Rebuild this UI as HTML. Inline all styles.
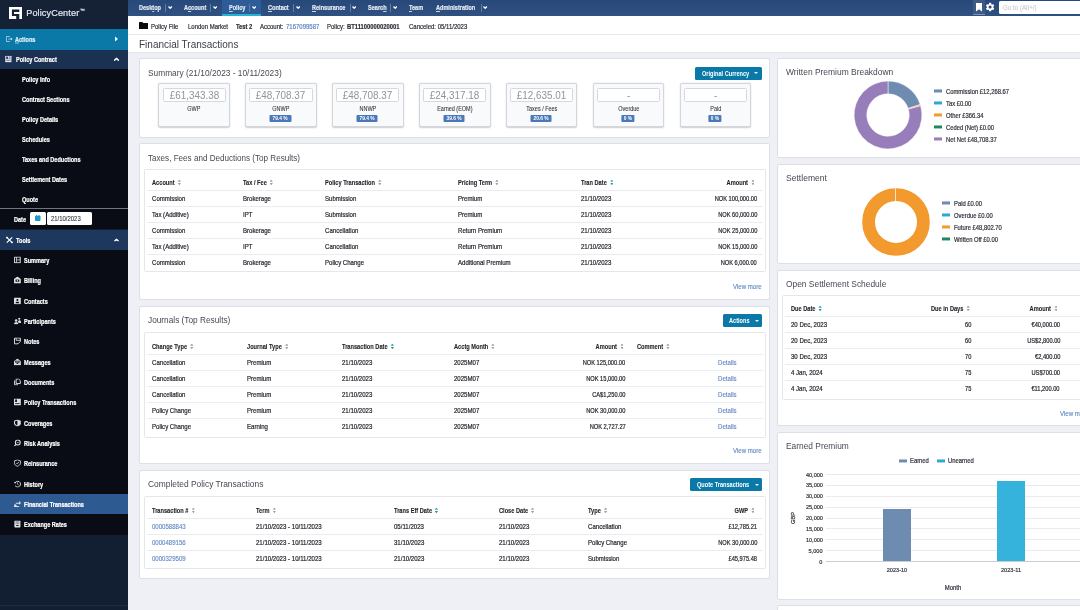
<!DOCTYPE html>
<html lang="en">
<head>
<meta charset="utf-8">
<title>Financial Transactions - PolicyCenter</title>
<style>
*{box-sizing:border-box;margin:0;padding:0}
html,body{width:1080px;height:610px;overflow:hidden}
body{font-family:"Liberation Sans",sans-serif;font-size:7px;color:#2b2f36;-webkit-text-stroke:.2px;background:#eef0f5;position:relative}
a{color:#5c86c2;text-decoration:none}
.abs{position:absolute}
#root{position:absolute;left:0;top:0;width:1080px;height:610px;overflow:hidden;will-change:transform;background:#eef0f5}
#side{position:absolute;left:0;top:0;width:127.5px;height:610px;background:#121e31;color:#fff;font-weight:bold;font-size:6.4px}
#logo{position:absolute;left:0;top:0;width:127.5px;height:29px;background:#152135}
#logo span{position:absolute;left:26.2px;top:9px;font-size:9.1px;line-height:1;font-weight:normal;color:#e4e8ee;letter-spacing:.13px;white-space:nowrap}
#logo sup{font-size:4.8px;position:relative;top:-.3px;left:.8px;vertical-align:top;letter-spacing:0}
.srow{position:absolute;left:0;width:127.5px}
.srow .t{position:absolute;top:calc(50% - .1px);transform:translateY(-50%) scaleX(.87);transform-origin:0 50%;white-space:nowrap}
.sitem{background:#090c15}
.ico{position:absolute;top:50%;transform:translateY(-50%)}
#nav{position:absolute;left:127.5px;top:0;width:952.5px;height:15.8px;background:linear-gradient(#27487a,#2f5180);color:#fff;font-size:6.4px;font-weight:bold}
#nav{z-index:2}
#nav .n u{text-decoration-thickness:.5px;text-underline-offset:.6px;text-decoration-color:rgba(255,255,255,.75)}
#nav .n{position:absolute;top:3.5px;white-space:nowrap;color:#e3eaf4;transform:scaleX(.87);transform-origin:0 50%}
#nav .sep{position:absolute;top:3.5px;width:1px;height:8.5px;background:#5f7ca3}
#nav svg.ch{position:absolute;top:5.5px}
#info{position:absolute;left:127.5px;top:15px;width:952.5px;height:20px;background:#fff;border-bottom:1px solid #e9eaed;font-size:6.6px}
#info span,#info a{position:absolute;top:8.1px;white-space:nowrap;transform:scaleX(.91);transform-origin:0 50%}
#info b{display:inline-block}
#title{position:absolute;left:127.5px;top:35px;width:952.5px;height:18px;background:#fff;border-bottom:1px solid #e4e5e9}
#title span{position:absolute;left:11.7px;top:2.7px;font-size:10.7px;color:#3a3f47;-webkit-text-stroke:0;transform:scaleX(.935);transform-origin:0 50%;white-space:nowrap}
.card{position:absolute;background:#fff;border:1px solid #dcdfe6;border-radius:2px}
.ct{position:absolute;left:7px;font-size:9.1px;color:#454a52;-webkit-text-stroke:0;white-space:nowrap;transform:translateY(-50%) scaleX(.92);transform-origin:0 50%}
.btn{position:absolute;background:#0a79a8;border-radius:1.5px;height:13px}
.btn span{position:absolute;left:6.6px;top:3px;color:#fff;font-weight:bold;font-size:6.4px;-webkit-text-stroke:0;white-space:nowrap;transform:scaleX(.875);transform-origin:0 50%}
.btn i{position:absolute;right:3.3px;top:5.4px;width:0;height:0;border-left:2.1px solid transparent;border-right:2.1px solid transparent;border-top:2.4px solid #fff}
.tbl{position:absolute;border:1px solid #e4e6ea;border-radius:1.5px;background:#fff}
.ln{position:absolute;left:2px;right:2px;height:1px;background:#ebecf0}
.c{position:absolute;white-space:nowrap;font-size:6.6px;color:#24272d;transform:translateY(-50%) scaleX(.92);transform-origin:0 50%}
.c.am{transform:translateY(-50%) scaleX(.865)}
.c.h{font-weight:bold;font-size:6.4px;color:#1d2025;-webkit-text-stroke:.1px;transform:translateY(-50%) scaleX(.885)}
.c.ra{transform-origin:100% 50%}
.lk,a.c{color:#5c86c2;-webkit-text-stroke:.1px}
.si{display:inline-block;width:3.8px;height:5.8px;margin-left:3.4px;vertical-align:-1px}
.tile{position:absolute;top:23.9px;width:71.7px;height:43.8px;border:1px solid #d3d6dc;border-radius:2px;background:#f9fafb;box-shadow:0 .5px 1.5px rgba(0,0,0,.2)}
.tile .v{position:absolute;left:3.2px;right:3.4px;top:3.6px;height:14.3px;border:1px solid #d5d8de;border-radius:1.5px;background:#fff}
.tile .v span{position:absolute;left:0;right:0;top:0;text-align:center;font-size:10.8px;line-height:13px;color:#8f939b;-webkit-text-stroke:0;transform:scaleX(.915)}
.tile .l{position:absolute;left:0;right:0;top:21px;text-align:center;font-size:6.3px;color:#33363c;-webkit-text-stroke:.08px;transform:scaleX(.87)}
.tile .b{position:absolute;left:calc(50% - .6px);top:30.8px;transform:translateX(-50%);height:7.2px;background:#4a78b8;border-radius:1px;white-space:nowrap}
.tile .b span{display:block;line-height:7.2px;padding:0 1.8px;color:#fff;font-weight:bold;-webkit-text-stroke:0;font-size:5.6px;transform:scaleX(.87)}
.lg{position:absolute;white-space:nowrap;font-size:6.5px;color:#2f333a;transform:translateY(-50%) scaleX(.9);transform-origin:0 50%}
.sw{position:absolute;width:7.6px;height:3.1px;transform:translateY(-50%)}
.ax{position:absolute;white-space:nowrap;font-size:6.2px;color:#2f333a;transform:translateY(-50%) scaleX(.9)}
</style>
</head>
<body>
<div id="root">
<div id="side">
<div id="logo"><svg class="abs" style="left:8.5px;top:6.8px" width="13" height="12.1" viewBox="0 0 13 12.1"><path d="M0 0H13V12.1H10.3V7H5V5H10.3V2.400H2.9V9.1H7.2V12.1H0Z" fill="#fff"/></svg><span>PolicyCenter<sup>™</sup></span></div>
<div class="srow" style="top:28.5px;height:21px;background:#0a79a8"><svg class="ico" style="left:6px" width="7" height="6" viewBox="0 0 7 6"><path d="M.4 .5h3.4M.4 5.5h3.4M.4 .5v5" stroke="#cfe6f1" stroke-width=".7" fill="none"/><path d="M2.2 3h3.2" stroke="#cfe6f1" stroke-width=".7"/><path d="M4.8 1.6L6.6 3 4.8 4.4z" fill="#cfe6f1"/></svg><span class="t" style="left:15px;color:#dff0f8"><u style="text-decoration-thickness:.5px;text-underline-offset:.5px;text-decoration-color:rgba(255,255,255,.6)">A</u>ctions</span><svg class="ico" style="left:114.5px" width="3" height="5" viewBox="0 0 3 5"><path d="M0 0L3 2.5 0 5z" fill="#fff"/></svg></div>
<div class="srow" style="top:49.5px;height:19.5px;background:#1b3152"><svg class="ico" style="left:5.1px" width="6.700" height="6.700" viewBox="0 0 6.5 7"><rect width="6.5" height="7" rx=".6" fill="#e2e6ec"/><rect x="1" y="1" width="1.8" height="2.4" fill="#1b3152"/><path d="M3.6 1.4h2M3.6 2.8h2M1 4.8h4.5" stroke="#1b3152" stroke-width=".6"/></svg><span class="t" style="left:16px">Policy Contract</span><svg class="ico" style="left:113.5px" width="5" height="3.4" viewBox="0 0 5 3.4"><path d="M.6 3L2.5 1 4.4 3" fill="none" stroke="#fff" stroke-width="1.4" stroke-linecap="round" stroke-linejoin="round"/></svg></div>
<div class="srow sitem" style="top:69px;height:20px"><span class="t" style="left:21.5px">Policy Info</span></div>
<div class="srow sitem" style="top:89px;height:20px"><span class="t" style="left:21.5px">Contract Sections</span></div>
<div class="srow sitem" style="top:109px;height:20px"><span class="t" style="left:21.5px">Policy Details</span></div>
<div class="srow sitem" style="top:129px;height:20px"><span class="t" style="left:21.5px">Schedules</span></div>
<div class="srow sitem" style="top:149px;height:20px"><span class="t" style="left:21.5px">Taxes and Deductions</span></div>
<div class="srow sitem" style="top:169px;height:20px"><span class="t" style="left:21.5px">Settlement Dates</span></div>
<div class="srow sitem" style="top:189px;height:20px"><span class="t" style="left:21.5px">Quote</span></div>
<div class="srow sitem" style="top:207.8px;height:21.7px;border-top:1.8px solid #71757c"><span class="t" style="left:13.5px;top:9.800px">Date</span><div class="abs" style="left:30px;top:3.400px;width:15.5px;height:12.5px;background:#fff;border-radius:1.5px"><svg class="abs" style="left:5px;top:3px" width="5.5" height="6" viewBox="0 0 5.5 6"><rect y=".8" width="5.5" height="5.2" rx=".7" fill="#1f9ac6"/><rect x="1" width=".9" height="1.6" fill="#1f9ac6"/><rect x="3.6" width=".9" height="1.6" fill="#1f9ac6"/></svg></div><div class="abs" style="left:47px;top:3.400px;width:45px;height:12.5px;background:#fff;border-radius:1.5px"><span class="abs" style="left:4px;top:2.6px;color:#2b2f36;font-weight:normal;font-size:6.6px;-webkit-text-stroke:.08px;transform:scaleX(.9);transform-origin:0 50%">21/10/2023</span></div></div>
<div class="srow" style="top:229.5px;height:20.5px;background:#1d385c"><svg class="ico" style="left:5.5px" width="7" height="7" viewBox="0 0 7 7"><path d="M.8 .8L6.2 6.2M6.2 .8L.8 6.2" stroke="#fff" stroke-width="1.2"/><circle cx="1" cy="1" r="1" fill="#fff"/><circle cx="6" cy="6" r=".9" fill="#fff"/></svg><span class="t" style="left:16px">Tools</span><svg class="ico" style="left:113.5px" width="5" height="3.4" viewBox="0 0 5 3.4"><path d="M.6 3L2.5 1 4.4 3" fill="none" stroke="#fff" stroke-width="1.4" stroke-linecap="round" stroke-linejoin="round"/></svg></div>
<div class="srow sitem" style="top:250.00px;height:20.37px;"><svg class="ico" style="left:13.5px" width="7" height="7.2" viewBox="0 0 7.2 7.2"><rect x="0.6" y="0.6" width="5.8" height="5.8" fill="none" stroke="#dcdfe5" stroke-width="1"/><path d="M2.6 .6v5.8M2.6 3.5h3.8" stroke="#dcdfe5" stroke-width=".8" fill="none"/></svg><span class="t" style="left:23.5px">Summary</span></div>
<div class="srow sitem" style="top:270.32px;height:20.37px;"><svg class="ico" style="left:13.5px" width="7" height="7.2" viewBox="0 0 7.2 7.2"><path d="M0 2.6L3.5 0 7 2.6V7H0z" fill="#dcdfe5"/><rect x="1.6" y="3.2" width="3.8" height="2.2" fill="#090c15"/><circle cx="3.5" cy="4.3" r=".8" fill="#dcdfe5"/></svg><span class="t" style="left:23.5px">Billing</span></div>
<div class="srow sitem" style="top:290.64px;height:20.37px;"><svg class="ico" style="left:13.5px" width="7" height="7.2" viewBox="0 0 7.2 7.2"><rect x="0" y="0" width="7" height="7" rx=".8" fill="#dcdfe5"/><circle cx="3.5" cy="2.6" r="1.1" fill="#090c15"/><path d="M1.6 5.8c0-2 3.8-2 3.8 0z" fill="#090c15"/></svg><span class="t" style="left:23.5px">Contacts</span></div>
<div class="srow sitem" style="top:310.96px;height:20.37px;"><svg class="ico" style="left:13.5px" width="7" height="7.2" viewBox="0 0 7.2 7.2"><circle cx="2.2" cy="3" r="1.3" fill="#dcdfe5"/><path d="M0 7c0-3 4.4-3 4.4 0z" fill="#dcdfe5"/><circle cx="5.4" cy="1.3" r="1.1" fill="#dcdfe5"/><path d="M4.2 4.4c0-2.2 3-2.2 3 0v1.2H4.6z" fill="#dcdfe5"/></svg><span class="t" style="left:23.5px">Participants</span></div>
<div class="srow sitem" style="top:331.28px;height:20.37px;"><svg class="ico" style="left:13.5px" width="7" height="7.2" viewBox="0 0 7.2 7.2"><path d="M.5 .5h6v3.6L4.1 6.5H.5z" fill="none" stroke="#dcdfe5" stroke-width="1"/><path d="M2.2 .5v2.4h4.3" fill="none" stroke="#dcdfe5" stroke-width=".9"/></svg><span class="t" style="left:23.5px">Notes</span></div>
<div class="srow sitem" style="top:351.60px;height:20.37px;"><svg class="ico" style="left:13.5px" width="7" height="7.2" viewBox="0 0 7.2 7.2"><path d="M0 2.8L3.5 0 7 2.8V7H0z" fill="#dcdfe5"/><path d="M1.3 2.2h4.4v2L3.5 5.6 1.3 4.2z" fill="#090c15"/><path d="M2 3h3M2 4h3" stroke="#dcdfe5" stroke-width=".5"/></svg><span class="t" style="left:23.5px">Messages</span></div>
<div class="srow sitem" style="top:371.92px;height:20.37px;"><svg class="ico" style="left:13.5px" width="7" height="7.2" viewBox="0 0 7.2 7.2"><path d="M2.2 .5h2.6l1.7 1.7v3H2.2z" fill="none" stroke="#dcdfe5" stroke-width="1"/><path d="M.6 2v4.5h3.6" fill="none" stroke="#dcdfe5" stroke-width="1"/></svg><span class="t" style="left:23.5px">Documents</span></div>
<div class="srow sitem" style="top:392.24px;height:20.37px;"><svg class="ico" style="left:13.5px" width="7" height="7.2" viewBox="0 0 7.2 7.2"><rect x="0" y="0" width="7" height="7" rx=".6" fill="#dcdfe5"/><rect x="1.2" y="1" width="1.8" height="2.6" fill="#090c15"/><path d="M1.2 5.2h4.6" stroke="#090c15" stroke-width=".8"/></svg><span class="t" style="left:23.5px">Policy Transactions</span></div>
<div class="srow sitem" style="top:412.56px;height:20.37px;"><svg class="ico" style="left:13.5px" width="7" height="7.2" viewBox="0 0 7.2 7.2"><path d="M3.5 0L7 1.2v2.6C7 5.6 5.4 6.6 3.5 7.2 1.6 6.6 0 5.6 0 3.8V1.2z" fill="#dcdfe5"/><path d="M3.5 1.1v5C2.3 5.6 1 5 1 3.7V2z" fill="#090c15"/></svg><span class="t" style="left:23.5px">Coverages</span></div>
<div class="srow sitem" style="top:432.88px;height:20.37px;"><svg class="ico" style="left:13.5px" width="7" height="7.2" viewBox="0 0 7.2 7.2"><circle cx="3.9" cy="3.1" r="2.5" fill="none" stroke="#dcdfe5" stroke-width="1.1"/><path d="M2 5L.4 6.8" stroke="#dcdfe5" stroke-width="1.2"/><path d="M2.8 3.2h2.2" stroke="#dcdfe5" stroke-width=".7"/></svg><span class="t" style="left:23.5px">Risk Analysis</span></div>
<div class="srow sitem" style="top:453.20px;height:20.37px;"><svg class="ico" style="left:13.5px" width="7" height="7.2" viewBox="0 0 7.2 7.2"><path d="M3.5 .4L6.6 1.4v2.4C6.6 5.4 5.2 6.3 3.5 6.9 1.8 6.3 .4 5.4 .4 3.8V1.4z" fill="none" stroke="#dcdfe5" stroke-width=".9"/><path d="M2.2 3.5l1 1 1.8-2" fill="none" stroke="#dcdfe5" stroke-width=".8"/></svg><span class="t" style="left:23.5px">Reinsurance</span></div>
<div class="srow sitem" style="top:473.52px;height:20.37px;"><svg class="ico" style="left:13.5px" width="7" height="7.2" viewBox="0 0 7.2 7.2"><path d="M1.2 5.4A3 3 0 1 0 .9 2.6" fill="none" stroke="#dcdfe5" stroke-width="1"/><path d="M0 1.2l.8 2 2-.6z" fill="#dcdfe5"/><path d="M3.6 2v1.7l1.2 .8" fill="none" stroke="#dcdfe5" stroke-width=".7"/></svg><span class="t" style="left:23.5px">History</span></div>
<div class="srow sitem" style="top:493.84px;height:20.37px;background:#2e5a92;"><svg class="ico" style="left:13.5px" width="7" height="7.2" viewBox="0 0 7.2 7.2"><path d="M1.8 2.2h3.4V.6L7.2 2.6 5.2 4.4V3.4H1.8z" fill="#dcdfe5"/><path d="M0 5.6h5v1H0z" fill="#dcdfe5"/><circle cx="1.3" cy="5" r="1.2" fill="#dcdfe5"/></svg><span class="t" style="left:23.5px">Financial Transactions</span></div>
<div class="srow sitem" style="top:514.16px;height:20.37px;"><svg class="ico" style="left:13.5px" width="7" height="7.2" viewBox="0 0 7.2 7.2"><rect x=".4" y="0" width="6.2" height="7.2" rx=".8" fill="#dcdfe5"/><path d="M1.6 1.4h3.8M1.6 2.8h3.8" stroke="#14213a" stroke-width=".5"/><rect x="2.3" y="4.6" width="2.4" height="1" fill="#090c15"/></svg><span class="t" style="left:23.5px">Exchange Rates</span></div>
<div class="srow" style="top:605.2px;height:1px;background:#1c2b42"></div>
</div>
<div id="nav">
<div class="abs" style="left:94.5px;top:0;width:38.9px;height:15.8px;background:#2d5c99;border-bottom:2px solid #25b4cb"></div>
<span class="n" style="left:11.5px">Desk<u>t</u>op</span>
<i class="sep" style="left:37.5px"></i>
<svg class="ch" style="left:40.9px" width="4.4" height="3" viewBox="0 0 4.4 3"><path d="M.5 .5L2.2 2.300 3.900 .5" fill="none" stroke="#fff" stroke-width="1.25"/></svg>
<span class="n" style="left:56.5px">A<u>c</u>count</span>
<i class="sep" style="left:82.3px"></i>
<svg class="ch" style="left:85.5px" width="4.4" height="3" viewBox="0 0 4.4 3"><path d="M.5 .5L2.2 2.300 3.900 .5" fill="none" stroke="#fff" stroke-width="1.25"/></svg>
<span class="n" style="left:101.5px"><u>P</u>olicy</span>
<i class="sep" style="left:121.3px"></i>
<svg class="ch" style="left:124.5px" width="4.4" height="3" viewBox="0 0 4.4 3"><path d="M.5 .5L2.2 2.300 3.900 .5" fill="none" stroke="#fff" stroke-width="1.25"/></svg>
<span class="n" style="left:140px"><u>C</u>ontact</span>
<i class="sep" style="left:165.8px"></i>
<svg class="ch" style="left:168.6px" width="4.4" height="3" viewBox="0 0 4.4 3"><path d="M.5 .5L2.2 2.300 3.900 .5" fill="none" stroke="#fff" stroke-width="1.25"/></svg>
<span class="n" style="left:184px"><u>R</u>einsurance</span>
<i class="sep" style="left:222px"></i>
<svg class="ch" style="left:224.6px" width="4.4" height="3" viewBox="0 0 4.4 3"><path d="M.5 .5L2.2 2.300 3.900 .5" fill="none" stroke="#fff" stroke-width="1.25"/></svg>
<span class="n" style="left:240.5px">Searc<u>h</u></span>
<i class="sep" style="left:262.3px"></i>
<svg class="ch" style="left:265.1px" width="4.4" height="3" viewBox="0 0 4.4 3"><path d="M.5 .5L2.2 2.300 3.900 .5" fill="none" stroke="#fff" stroke-width="1.25"/></svg>
<span class="n" style="left:281.5px"><u>T</u>eam</span>
<span class="n" style="left:308.5px"><u>A</u>dministration</span>
<i class="sep" style="left:353.3px"></i>
<svg class="ch" style="left:355.8px" width="4.4" height="3" viewBox="0 0 4.4 3"><path d="M.5 .5L2.2 2.300 3.900 .5" fill="none" stroke="#fff" stroke-width="1.25"/></svg>
<div class="abs" style="left:845.5px;top:0;width:11.5px;height:15px;background:#3d5a85;border-bottom:1px solid #7f93b2"></div>
<svg class="abs" style="left:848.3px;top:3px" width="6" height="8.5" viewBox="0 0 6 8.5"><path d="M0 0h6v8.5L3 6.3 0 8.5z" fill="#fff"/></svg>
<svg class="abs" style="left:857.9px;top:2.100px" width="10.2" height="10.2" viewBox="0 0 24 24"><path fill="#fff" d="M19.4 13c.04-.33.06-.66.06-1s-.02-.67-.06-1l2.1-1.65a.5.5 0 0 0 .12-.64l-2-3.46a.5.5 0 0 0-.6-.22l-2.5 1a7.3 7.3 0 0 0-1.7-.98l-.38-2.65A.5.5 0 0 0 14 2h-4a.5.5 0 0 0-.5.42l-.37 2.65c-.6.25-1.17.58-1.7.98l-2.48-1a.5.5 0 0 0-.6.22l-2 3.46a.5.5 0 0 0 .12.64L4.57 11c-.04.33-.07.66-.07 1s.03.67.07 1l-2.1 1.65a.5.5 0 0 0-.12.64l2 3.46c.12.22.38.3.6.22l2.5-1c.5.4 1.080.73 1.7.98l.37 2.65c.04.24.25.42.5.42h4c.25 0 .46-.18.5-.42l.37-2.65c.6-.25 1.17-.58 1.7-.98l2.48 1c.23.08.5 0 .6-.22l2-3.46a.5.5 0 0 0-.12-.64L19.4 13zM12 15.6a3.600 3.600 0 1 1 0-7.200 3.600 3.600 0 0 1 0 7.200z"/></svg>
<div class="abs" style="left:871.5px;top:1.300px;width:90px;height:12.4px;background:#fff;border-radius:1.5px"><span class="abs" style="left:3.600px;top:3px;font-size:6.4px;font-weight:normal;-webkit-text-stroke:0;color:#bfc3c9;white-space:nowrap;transform:scaleX(.97);transform-origin:0 50%">Go to (Alt+/)</span></div>
</div>
<div id="info">
<svg class="abs" style="left:11.5px;top:7px" width="9.2" height="7.300" viewBox="0 0 9.5 7.5"><path d="M0 .6C0 .3 .3 0 .6 0h2.8l1 1.100h4.500c.3 0 .6.3 .6.600v5.200c0 .3-.3.600-.6.600H.6C.3 7.500 0 7.200 0 6.900z" fill="#0b0b0c"/></svg>
<span style="left:23.5px">Policy File</span>
<span style="left:60.5px">London Market</span>
<span style="left:108.5px;font-weight:bold;transform:scaleX(.88)">Test 2</span>
<span style="left:132.5px">Account:</span>
<a style="left:158.5px">7167099587</a>
<span style="left:199.5px">Policy:</span>
<span style="left:219.5px;font-weight:bold;transform:scaleX(.885)">BT11100000020001</span>
<span style="left:281.5px">Canceled: 05/11/2023</span>
</div>
<div id="title"><span>Financial Transactions</span></div>
<div id="main">
<div class="card" style="left:139px;top:58.3px;width:631px;height:79.3px">
<span class="ct" style="left:7.600px;top:13.600px;transform:translateY(-50%) scaleX(0.916)">Summary (21/10/2023 - 10/11/2023)</span>
<div class="btn" style="left:555.1px;top:7.8px;width:66.7px;height:12.8px"><span>Original Currency</span><i></i></div>
<div class="tile" style="left:18.4px"><div class="v"><span>£61,343.38</span></div><div class="l">GWP</div></div>
<div class="tile" style="left:105.25px"><div class="v"><span>£48,708.37</span></div><div class="l">GNWP</div><div class="b"><span>79.4 %</span></div></div>
<div class="tile" style="left:192.1px"><div class="v"><span>£48,708.37</span></div><div class="l">NNWP</div><div class="b"><span>79.4 %</span></div></div>
<div class="tile" style="left:278.95px"><div class="v"><span>£24,317.18</span></div><div class="l">Earned (EOM)</div><div class="b"><span>39.6 %</span></div></div>
<div class="tile" style="left:365.8px"><div class="v"><span>£12,635.01</span></div><div class="l">Taxes / Fees</div><div class="b"><span>20.6 %</span></div></div>
<div class="tile" style="left:452.65px"><div class="v"><span>-</span></div><div class="l">Overdue</div><div class="b"><span>0 %</span></div></div>
<div class="tile" style="left:539.5px"><div class="v"><span>-</span></div><div class="l">Paid</div><div class="b"><span>0 %</span></div></div>
</div>
<div class="card" style="left:139px;top:143.2px;width:631px;height:156.6px"></div>
<span class="ct" style="left:147.5px;top:157.5px;transform:translateY(-50%) scaleX(0.89)">Taxes, Fees and Deductions (Top Results)</span>
<div class="tbl" style="left:144px;top:169px;width:621.5px;height:102.5px">
<span class="c h" style="left:7px;top:12px">Account<svg class="si" viewBox="0 0 4 6"><path d="M0 2.400L2 0 4 2.400z" fill="#9a9fa8"/><path d="M0 3.600L2 6 4 3.600z" fill="#9a9fa8"/></svg></span>
<span class="c h" style="left:98px;top:12px">Tax / Fee<svg class="si" viewBox="0 0 4 6"><path d="M0 2.400L2 0 4 2.400z" fill="#9a9fa8"/><path d="M0 3.600L2 6 4 3.600z" fill="#9a9fa8"/></svg></span>
<span class="c h" style="left:180px;top:12px">Policy Transaction<svg class="si" viewBox="0 0 4 6"><path d="M0 2.400L2 0 4 2.400z" fill="#9a9fa8"/><path d="M0 3.600L2 6 4 3.600z" fill="#9a9fa8"/></svg></span>
<span class="c h" style="left:313px;top:12px">Pricing Term<svg class="si" viewBox="0 0 4 6"><path d="M0 2.400L2 0 4 2.400z" fill="#9a9fa8"/><path d="M0 3.600L2 6 4 3.600z" fill="#9a9fa8"/></svg></span>
<span class="c h" style="left:436px;top:12px">Tran Date<svg class="si" viewBox="0 0 4 6"><path d="M0 2.400L2 0 4 2.400z" fill="#2a9fc9"/><path d="M0 3.600L2 6 4 3.600z" fill="#2f9a74"/></svg></span>
<span class="c h ra" style="right:9.7px;top:12px">Amount<svg class="si" viewBox="0 0 4 6"><path d="M0 2.400L2 0 4 2.400z" fill="#9a9fa8"/><path d="M0 3.600L2 6 4 3.600z" fill="#9a9fa8"/></svg></span>
<i class="ln" style="top:19.5px"></i>
<span class="c " style="left:7px;top:28px">Commission</span>
<span class="c " style="left:98px;top:28px">Brokerage</span>
<span class="c " style="left:180px;top:28px">Submission</span>
<span class="c " style="left:313px;top:28px">Premium</span>
<span class="c " style="left:436px;top:28px">21/10/2023</span>
<span class="c ra am " style="right:7.5px;top:28px">NOK 100,000.00</span>
<i class="ln" style="top:35.5px"></i>
<span class="c " style="left:7px;top:44px">Tax (Additive)</span>
<span class="c " style="left:98px;top:44px">IPT</span>
<span class="c " style="left:180px;top:44px">Submission</span>
<span class="c " style="left:313px;top:44px">Premium</span>
<span class="c " style="left:436px;top:44px">21/10/2023</span>
<span class="c ra am " style="right:7.5px;top:44px">NOK 60,000.00</span>
<i class="ln" style="top:51.5px"></i>
<span class="c " style="left:7px;top:60px">Commission</span>
<span class="c " style="left:98px;top:60px">Brokerage</span>
<span class="c " style="left:180px;top:60px">Cancellation</span>
<span class="c " style="left:313px;top:60px">Return Premium</span>
<span class="c " style="left:436px;top:60px">21/10/2023</span>
<span class="c ra am " style="right:7.5px;top:60px">NOK 25,000.00</span>
<i class="ln" style="top:67.5px"></i>
<span class="c " style="left:7px;top:76px">Tax (Additive)</span>
<span class="c " style="left:98px;top:76px">IPT</span>
<span class="c " style="left:180px;top:76px">Cancellation</span>
<span class="c " style="left:313px;top:76px">Return Premium</span>
<span class="c " style="left:436px;top:76px">21/10/2023</span>
<span class="c ra am " style="right:7.5px;top:76px">NOK 15,000.00</span>
<i class="ln" style="top:83.5px"></i>
<span class="c " style="left:7px;top:92px">Commission</span>
<span class="c " style="left:98px;top:92px">Brokerage</span>
<span class="c " style="left:180px;top:92px">Policy Change</span>
<span class="c " style="left:313px;top:92px">Additional Premium</span>
<span class="c " style="left:436px;top:92px">21/10/2023</span>
<span class="c ra am " style="right:7.5px;top:92px">NOK 6,000.00</span>
</div>
<a class="c" style="left:733px;top:286.4px">View more</a>
<div class="card" style="left:139px;top:305.8px;width:631px;height:158px"></div>
<span class="ct" style="left:147.5px;top:320px;transform:translateY(-50%) scaleX(0.91)">Journals (Top Results)</span>
<div class="btn" style="left:722.8px;top:314.4px;width:39.1px;height:12.8px"><span>Actions</span><i></i></div>
<div class="tbl" style="left:144px;top:332px;width:621.5px;height:105.5px">
<span class="c h" style="left:7px;top:13px">Change Type<svg class="si" viewBox="0 0 4 6"><path d="M0 2.400L2 0 4 2.400z" fill="#9a9fa8"/><path d="M0 3.600L2 6 4 3.600z" fill="#9a9fa8"/></svg></span>
<span class="c h" style="left:101.8px;top:13px">Journal Type<svg class="si" viewBox="0 0 4 6"><path d="M0 2.400L2 0 4 2.400z" fill="#9a9fa8"/><path d="M0 3.600L2 6 4 3.600z" fill="#9a9fa8"/></svg></span>
<span class="c h" style="left:196.5px;top:13px">Transaction Date<svg class="si" viewBox="0 0 4 6"><path d="M0 2.400L2 0 4 2.400z" fill="#2a9fc9"/><path d="M0 3.600L2 6 4 3.600z" fill="#2f9a74"/></svg></span>
<span class="c h" style="left:309px;top:13px">Acctg Month<svg class="si" viewBox="0 0 4 6"><path d="M0 2.400L2 0 4 2.400z" fill="#9a9fa8"/><path d="M0 3.600L2 6 4 3.600z" fill="#9a9fa8"/></svg></span>
<span class="c h ra" style="right:141.2px;top:13px">Amount<svg class="si" viewBox="0 0 4 6"><path d="M0 2.400L2 0 4 2.400z" fill="#9a9fa8"/><path d="M0 3.600L2 6 4 3.600z" fill="#9a9fa8"/></svg></span>
<span class="c h" style="left:492px;top:13px">Comment<svg class="si" viewBox="0 0 4 6"><path d="M0 2.400L2 0 4 2.400z" fill="#9a9fa8"/><path d="M0 3.600L2 6 4 3.600z" fill="#9a9fa8"/></svg></span>
<span class="c h" style="left:573px;top:13px"></span>
<i class="ln" style="top:20.5px"></i>
<span class="c " style="left:7px;top:29px">Cancellation</span>
<span class="c " style="left:101.8px;top:29px">Premium</span>
<span class="c " style="left:196.5px;top:29px">21/10/2023</span>
<span class="c " style="left:309px;top:29px">2025M07</span>
<span class="c ra am " style="right:139px;top:29px">NOK 125,000.00</span>
<span class="c lk" style="left:573px;top:29px">Details</span>
<i class="ln" style="top:36.5px"></i>
<span class="c " style="left:7px;top:45px">Cancellation</span>
<span class="c " style="left:101.8px;top:45px">Premium</span>
<span class="c " style="left:196.5px;top:45px">21/10/2023</span>
<span class="c " style="left:309px;top:45px">2025M07</span>
<span class="c ra am " style="right:139px;top:45px">NOK 15,000.00</span>
<span class="c lk" style="left:573px;top:45px">Details</span>
<i class="ln" style="top:52.5px"></i>
<span class="c " style="left:7px;top:61px">Cancellation</span>
<span class="c " style="left:101.8px;top:61px">Premium</span>
<span class="c " style="left:196.5px;top:61px">21/10/2023</span>
<span class="c " style="left:309px;top:61px">2025M07</span>
<span class="c ra am " style="right:139px;top:61px">CA$1,250.00</span>
<span class="c lk" style="left:573px;top:61px">Details</span>
<i class="ln" style="top:68.5px"></i>
<span class="c " style="left:7px;top:77px">Policy Change</span>
<span class="c " style="left:101.8px;top:77px">Premium</span>
<span class="c " style="left:196.5px;top:77px">21/10/2023</span>
<span class="c " style="left:309px;top:77px">2025M07</span>
<span class="c ra am " style="right:139px;top:77px">NOK 30,000.00</span>
<span class="c lk" style="left:573px;top:77px">Details</span>
<i class="ln" style="top:84.5px"></i>
<span class="c " style="left:7px;top:93px">Policy Change</span>
<span class="c " style="left:101.8px;top:93px">Earning</span>
<span class="c " style="left:196.5px;top:93px">21/10/2023</span>
<span class="c " style="left:309px;top:93px">2025M07</span>
<span class="c ra am " style="right:139px;top:93px">NOK 2,727.27</span>
<span class="c lk" style="left:573px;top:93px">Details</span>
</div>
<a class="c" style="left:733px;top:450.2px">View more</a>
<div class="card" style="left:139px;top:469.8px;width:631px;height:109.2px"></div>
<span class="ct" style="left:147.5px;top:483.5px;transform:translateY(-50%) scaleX(0.924)">Completed Policy Transactions</span>
<div class="btn" style="left:690.2px;top:478.3px;width:71.7px;height:12.8px"><span>Quote Transactions</span><i></i></div>
<div class="tbl" style="left:144px;top:496px;width:621.5px;height:72.5px">
<span class="c h" style="left:7px;top:13px">Transaction #<svg class="si" viewBox="0 0 4 6"><path d="M0 2.400L2 0 4 2.400z" fill="#9a9fa8"/><path d="M0 3.600L2 6 4 3.600z" fill="#9a9fa8"/></svg></span>
<span class="c h" style="left:111px;top:13px">Term<svg class="si" viewBox="0 0 4 6"><path d="M0 2.400L2 0 4 2.400z" fill="#9a9fa8"/><path d="M0 3.600L2 6 4 3.600z" fill="#9a9fa8"/></svg></span>
<span class="c h" style="left:249px;top:13px">Trans Eff Date<svg class="si" viewBox="0 0 4 6"><path d="M0 2.400L2 0 4 2.400z" fill="#2a9fc9"/><path d="M0 3.600L2 6 4 3.600z" fill="#2f9a74"/></svg></span>
<span class="c h" style="left:354px;top:13px">Close Date<svg class="si" viewBox="0 0 4 6"><path d="M0 2.400L2 0 4 2.400z" fill="#9a9fa8"/><path d="M0 3.600L2 6 4 3.600z" fill="#9a9fa8"/></svg></span>
<span class="c h" style="left:443px;top:13px">Type<svg class="si" viewBox="0 0 4 6"><path d="M0 2.400L2 0 4 2.400z" fill="#9a9fa8"/><path d="M0 3.600L2 6 4 3.600z" fill="#9a9fa8"/></svg></span>
<span class="c h ra" style="right:9.7px;top:13px">GWP<svg class="si" viewBox="0 0 4 6"><path d="M0 2.400L2 0 4 2.400z" fill="#9a9fa8"/><path d="M0 3.600L2 6 4 3.600z" fill="#9a9fa8"/></svg></span>
<i class="ln" style="top:20.5px"></i>
<span class="c lk" style="left:7px;top:29px">0000588843</span>
<span class="c " style="left:111px;top:29px">21/10/2023 - 10/11/2023</span>
<span class="c " style="left:249px;top:29px">05/11/2023</span>
<span class="c " style="left:354px;top:29px">21/10/2023</span>
<span class="c " style="left:443px;top:29px">Cancellation</span>
<span class="c ra am " style="right:7.5px;top:29px">£12,785.21</span>
<i class="ln" style="top:36.5px"></i>
<span class="c lk" style="left:7px;top:45px">0000489156</span>
<span class="c " style="left:111px;top:45px">21/10/2023 - 10/11/2023</span>
<span class="c " style="left:249px;top:45px">31/10/2023</span>
<span class="c " style="left:354px;top:45px">21/10/2023</span>
<span class="c " style="left:443px;top:45px">Policy Change</span>
<span class="c ra am " style="right:7.5px;top:45px">NOK 30,000.00</span>
<i class="ln" style="top:52.5px"></i>
<span class="c lk" style="left:7px;top:61px">0000329509</span>
<span class="c " style="left:111px;top:61px">21/10/2023 - 10/11/2023</span>
<span class="c " style="left:249px;top:61px">21/10/2023</span>
<span class="c " style="left:354px;top:61px">21/10/2023</span>
<span class="c " style="left:443px;top:61px">Submission</span>
<span class="c ra am " style="right:7.5px;top:61px">£45,975.48</span>
</div>
<div class="card" style="left:777.2px;top:58.3px;width:320px;height:99.5px"></div>
<span class="ct" style="left:786px;top:72px;transform:translateY(-50%) scaleX(0.928)">Written Premium Breakdown</span>
<svg class="abs" style="left:852px;top:79.2px" width="72" height="72" viewBox="-36 -36 72 72">
<path d="M0.000 -33.900A33.9 33.9 0 0 1 32.241 -10.476L20.162 -6.551A21.2 21.2 0 0 0 0.000 -21.200Z" fill="#6e8cb0" stroke="#fff" stroke-width=".5"/>
<path d="M32.241 -10.476A33.9 33.9 0 0 1 32.611 -9.259L20.394 -5.790A21.2 21.2 0 0 0 20.162 -6.551Z" fill="#f39a2e" stroke="#fff" stroke-width=".5"/>
<path d="M32.611 -9.259A33.9 33.9 0 1 1 -0.000 -33.900L-0.000 -21.200A21.2 21.2 0 1 0 20.394 -5.790Z" fill="#987dbb" stroke="#fff" stroke-width=".5"/>
</svg>
<i class="sw" style="left:934px;top:91px;background:#6e8cb0"></i><span class="lg" style="left:946px;top:91px">Commission £12,268.67</span>
<i class="sw" style="left:934px;top:103.1px;background:#2eaad6"></i><span class="lg" style="left:946px;top:103.1px">Tax £0.00</span>
<i class="sw" style="left:934px;top:115.2px;background:#f39a2e"></i><span class="lg" style="left:946px;top:115.2px">Other £366.34</span>
<i class="sw" style="left:934px;top:127.3px;background:#1f8a62"></i><span class="lg" style="left:946px;top:127.3px">Ceded (Net) £0.00</span>
<i class="sw" style="left:934px;top:139.4px;background:#987dbb"></i><span class="lg" style="left:946px;top:139.4px">Net Net £48,708.37</span>
<div class="card" style="left:777.2px;top:164px;width:320px;height:99.8px"></div>
<span class="ct" style="left:786px;top:178px;transform:translateY(-50%) scaleX(0.943)">Settlement</span>
<svg class="abs" style="left:859.5px;top:185.8px" width="72" height="72" viewBox="-36 -36 72 72">
<circle r="27.4" fill="none" stroke="#f39a2e" stroke-width="12.8"/>
</svg>
<i class="abs" style="left:895.2px;top:188px;width:.6px;height:12.800px;background:#fbe3c4"></i>
<i class="sw" style="left:942px;top:203px;background:#6e8cb0"></i><span class="lg" style="left:954px;top:203px">Paid £0.00</span>
<i class="sw" style="left:942px;top:215.1px;background:#2eaad6"></i><span class="lg" style="left:954px;top:215.1px">Overdue £0.00</span>
<i class="sw" style="left:942px;top:227.2px;background:#f39a2e"></i><span class="lg" style="left:954px;top:227.2px">Future £48,802.70</span>
<i class="sw" style="left:942px;top:239.3px;background:#1f8a62"></i><span class="lg" style="left:954px;top:239.3px">Written Off £0.00</span>
<div class="card" style="left:777.2px;top:269.6px;width:320px;height:156.4px"></div>
<span class="ct" style="left:786px;top:283.5px;transform:translateY(-50%) scaleX(0.923)">Open Settlement Schedule</span>
<div class="tbl" style="left:782px;top:294.8px;width:320px;height:105.5px">
<span class="c h" style="left:7.7px;top:12px">Due Date<svg class="si" viewBox="0 0 4 6"><path d="M0 2.400L2 0 4 2.400z" fill="#2a9fc9"/><path d="M0 3.600L2 6 4 3.600z" fill="#2f9a74"/></svg></span>
<span class="c h ra" style="right:131.7px;top:12px">Due in Days<svg class="si" viewBox="0 0 4 6"><path d="M0 2.400L2 0 4 2.400z" fill="#9a9fa8"/><path d="M0 3.600L2 6 4 3.600z" fill="#9a9fa8"/></svg></span>
<span class="c h ra" style="right:43.2px;top:12px">Amount<svg class="si" viewBox="0 0 4 6"><path d="M0 2.400L2 0 4 2.400z" fill="#9a9fa8"/><path d="M0 3.600L2 6 4 3.600z" fill="#9a9fa8"/></svg></span>
<i class="ln" style="top:20.2px"></i>
<span class="c " style="left:7.7px;top:27.9px">20 Dec, 2023</span>
<span class="c ra am " style="right:129.5px;top:27.9px">60</span>
<span class="c ra am " style="right:41px;top:27.9px">€40,000.00</span>
<i class="ln" style="top:36.2px"></i>
<span class="c " style="left:7.7px;top:43.9px">20 Dec, 2023</span>
<span class="c ra am " style="right:129.5px;top:43.9px">60</span>
<span class="c ra am " style="right:41px;top:43.9px">US$2,800.00</span>
<i class="ln" style="top:52.2px"></i>
<span class="c " style="left:7.7px;top:59.9px">30 Dec, 2023</span>
<span class="c ra am " style="right:129.5px;top:59.9px">70</span>
<span class="c ra am " style="right:41px;top:59.9px">€2,400.00</span>
<i class="ln" style="top:68.2px"></i>
<span class="c " style="left:7.7px;top:75.9px">4 Jan, 2024</span>
<span class="c ra am " style="right:129.5px;top:75.9px">75</span>
<span class="c ra am " style="right:41px;top:75.9px">US$700.00</span>
<i class="ln" style="top:84.2px"></i>
<span class="c " style="left:7.7px;top:91.9px">4 Jan, 2024</span>
<span class="c ra am " style="right:129.5px;top:91.9px">75</span>
<span class="c ra am " style="right:41px;top:91.9px">€11,200.00</span>
</div>
<a class="c" style="left:1060px;top:412.5px">View more</a>
<div class="card" style="left:777.2px;top:432px;width:320px;height:167.7px"></div>
<div class="card" style="left:777.2px;top:605.1px;width:320px;height:20px"></div>
<span class="ct" style="left:786px;top:446px;transform:translateY(-50%) scaleX(0.92)">Earned Premium</span>
<i class="sw" style="left:899px;top:460.5px;background:#6e8cb0"></i><span class="lg" style="left:910px;top:460px">Earned</span>
<i class="sw" style="left:937px;top:460.5px;background:#2eaad6"></i><span class="lg" style="left:948px;top:460px">Unearned</span>
<span class="ax" style="right:257.5px;top:560.6px;transform-origin:100% 50%">0</span>
<i class="abs" style="left:825.5px;top:561.1px;width:255px;height:1px;background:#c9ccd2"></i>
<span class="ax" style="right:257.5px;top:549.72px;transform-origin:100% 50%">5,000</span>
<i class="abs" style="left:825.5px;top:550.22px;width:255px;height:0.8px;background:#e9ebee"></i>
<span class="ax" style="right:257.5px;top:538.84px;transform-origin:100% 50%">10,000</span>
<i class="abs" style="left:825.5px;top:539.34px;width:255px;height:0.8px;background:#e9ebee"></i>
<span class="ax" style="right:257.5px;top:527.96px;transform-origin:100% 50%">15,000</span>
<i class="abs" style="left:825.5px;top:528.46px;width:255px;height:0.8px;background:#e9ebee"></i>
<span class="ax" style="right:257.5px;top:517.08px;transform-origin:100% 50%">20,000</span>
<i class="abs" style="left:825.5px;top:517.58px;width:255px;height:0.8px;background:#e9ebee"></i>
<span class="ax" style="right:257.5px;top:506.2px;transform-origin:100% 50%">25,000</span>
<i class="abs" style="left:825.5px;top:506.7px;width:255px;height:0.8px;background:#e9ebee"></i>
<span class="ax" style="right:257.5px;top:495.32px;transform-origin:100% 50%">30,000</span>
<i class="abs" style="left:825.5px;top:495.82px;width:255px;height:0.8px;background:#e9ebee"></i>
<span class="ax" style="right:257.5px;top:484.44px;transform-origin:100% 50%">35,000</span>
<i class="abs" style="left:825.5px;top:484.94px;width:255px;height:0.8px;background:#e9ebee"></i>
<span class="ax" style="right:257.5px;top:473.56px;transform-origin:100% 50%">40,000</span>
<i class="abs" style="left:825.5px;top:474.06px;width:255px;height:0.8px;background:#e9ebee"></i>
<i class="abs" style="left:883px;top:508.586px;width:28px;height:52.9138px;background:#6e8cb0"></i>
<i class="abs" style="left:997px;top:481.097px;width:28px;height:80.4032px;background:#35b3dc"></i>
<span class="ax" style="left:896.5px;top:569.2px;transform:translate(-50%,-50%) scaleX(.9)">2023-10</span>
<span class="ax" style="left:1010.5px;top:569.2px;transform:translate(-50%,-50%) scaleX(.9)">2023-11</span>
<span class="ax" style="left:953px;top:587px;font-size:6.6px;transform:translate(-50%,-50%) scaleX(.9)">Month</span>
<span class="ax" style="left:792px;top:518px;transform:translate(-50%,-50%) rotate(-90deg) scaleX(.9)">GBP</span>
</div>
</div>
</body>
</html>
